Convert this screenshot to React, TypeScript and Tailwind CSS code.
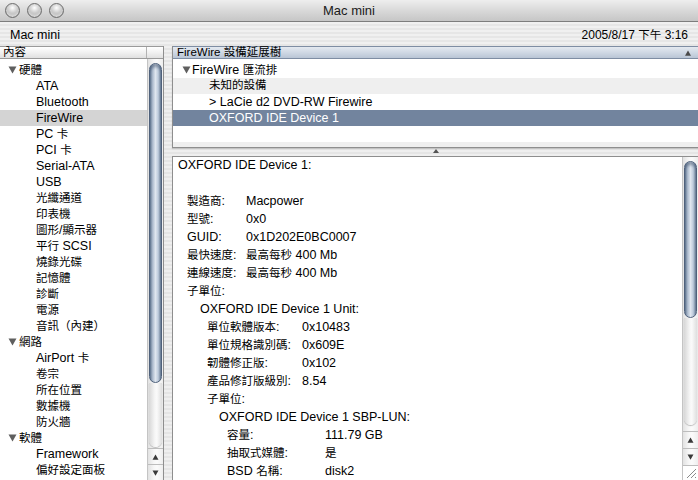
import { Fragment } from 'react';

const sidebar: { label: string; group?: boolean; selected?: boolean }[] = [
  { label: '硬體', group: true },
  { label: 'ATA' },
  { label: 'Bluetooth' },
  { label: 'FireWire', selected: true },
  { label: 'PC 卡' },
  { label: 'PCI 卡' },
  { label: 'Serial-ATA' },
  { label: 'USB' },
  { label: '光纖通道' },
  { label: '印表機' },
  { label: '圖形/顯示器' },
  { label: '平行 SCSI' },
  { label: '燒錄光碟' },
  { label: '記憶體' },
  { label: '診斷' },
  { label: '電源' },
  { label: '音訊（內建）' },
  { label: '網路', group: true },
  { label: 'AirPort 卡' },
  { label: '卷宗' },
  { label: '所在位置' },
  { label: '數據機' },
  { label: '防火牆' },
  { label: '軟體', group: true },
  { label: 'Framework' },
  { label: '偏好設定面板' },
];

type Line =
  | { kind: 'head'; text: string; indent: string }
  | { kind: 'pair'; label: string; value: string; indent: string; width: string }
  | { kind: 'blank' };

const details: Line[] = [
  { kind: 'head', text: 'OXFORD IDE Device 1:', indent: 'pl-[5px]' },
  { kind: 'blank' },
  { kind: 'pair', label: '製造商:', value: 'Macpower', indent: 'pl-[14px]', width: 'w-[59px]' },
  { kind: 'pair', label: '型號:', value: '0x0', indent: 'pl-[14px]', width: 'w-[59px]' },
  { kind: 'pair', label: 'GUID:', value: '0x1D202E0BC0007', indent: 'pl-[14px]', width: 'w-[59px]' },
  { kind: 'pair', label: '最快速度:', value: '最高每秒 400 Mb', indent: 'pl-[14px]', width: 'w-[59px]' },
  { kind: 'pair', label: '連線速度:', value: '最高每秒 400 Mb', indent: 'pl-[14px]', width: 'w-[59px]' },
  { kind: 'head', text: '子單位:', indent: 'pl-[14px]' },
  { kind: 'head', text: 'OXFORD IDE Device 1 Unit:', indent: 'pl-[27px]' },
  { kind: 'pair', label: '單位軟體版本:', value: '0x10483', indent: 'pl-[34px]', width: 'w-[95px]' },
  { kind: 'pair', label: '單位規格識別碼:', value: '0x609E', indent: 'pl-[34px]', width: 'w-[95px]' },
  { kind: 'pair', label: '韌體修正版:', value: '0x102', indent: 'pl-[34px]', width: 'w-[95px]' },
  { kind: 'pair', label: '產品修訂版級別:', value: '8.54', indent: 'pl-[34px]', width: 'w-[95px]' },
  { kind: 'head', text: '子單位:', indent: 'pl-[34px]' },
  { kind: 'head', text: 'OXFORD IDE Device 1 SBP-LUN:', indent: 'pl-[46px]' },
  { kind: 'pair', label: '容量:', value: '111.79 GB', indent: 'pl-[54px]', width: 'w-[98px]' },
  { kind: 'pair', label: '抽取式媒體:', value: '是', indent: 'pl-[54px]', width: 'w-[98px]' },
  { kind: 'pair', label: 'BSD 名稱:', value: 'disk2', indent: 'pl-[54px]', width: 'w-[98px]' },
];

// Chinese runs are drawn a touch smaller so they keep the narrow Lucida-era widths
function T({ s }: { s: string }) {
  const parts = s.split(/([\u3000-\u9fff\uff00-\uffef]+)/).filter(Boolean);
  return (
    <>
      {parts.map((p, i) =>
        /[\u3000-\u9fff\uff00-\uffef]/.test(p) ? (
          <span key={i} className="text-[11.5px]">{p}</span>
        ) : (
          <Fragment key={i}>{p}</Fragment>
        ),
      )}
    </>
  );
}

function Tri({ up = false, className = '' }: { up?: boolean; className?: string }) {
  return (
    <svg width="9" height="8" viewBox="0 0 9 8" className={className}>
      <polygon points={up ? '4.5,0.5 8.5,7.5 0.5,7.5' : '0.5,0.5 8.5,0.5 4.5,7.5'} fill="currentColor" />
    </svg>
  );
}

function Light() {
  return (
    <span className="h-[15px] w-[15px] rounded-full border border-[#6e6e6e] bg-[radial-gradient(circle_at_50%_30%,#ffffff_0%,#d6d6d6_35%,#9a9a9a_75%,#c8c8c8_100%)] shadow-[inset_0_-2px_3px_rgba(255,255,255,0.7)]" />
  );
}

function Scroller({ thumb, channel, arrowH, grip }: { thumb: string; channel: string; arrowH: string; grip?: boolean }) {
  return (
    <div className="flex h-full w-[16px] shrink-0 flex-col border-l border-[#c4c4c4] bg-[linear-gradient(90deg,#e2e2e2,#f7f7f7_40%,#fbfbfb_60%,#eeeeee)]">
      <div className="pt-[4px]">
        <div className={`mx-[1px] ${thumb} rounded-full border border-[#4f617b] bg-[linear-gradient(90deg,#6d819c_0%,#a9b8cb_22%,#dfe6ef_50%,#bccadb_75%,#74879f_100%)] shadow-[inset_0_3px_3px_rgba(20,40,70,0.4)]`} />
        <div className={`mx-[1px] ${channel} rounded-b-full bg-[linear-gradient(90deg,#d7d7d7,#f6f6f6_45%,#fafafa_60%,#dedede)] shadow-[0_1px_1px_rgba(0,0,0,0.25)]`} />
      </div>
      <div className="flex-1" />
      <div className={`flex ${arrowH} items-center justify-center border-t border-[#bdbdbd] text-[#3a3a3a]`}>
        <Tri up className="h-[6px] w-[7px]" />
      </div>
      <div className={`flex ${arrowH} items-center justify-center border-t border-[#bdbdbd] text-[#3a3a3a]`}>
        <Tri className="h-[6px] w-[7px]" />
      </div>
      {grip && (
        <div className="flex h-[15px] items-end justify-end border-t border-[#bdbdbd] bg-white pb-[1px] pr-[1px]">
          <svg width="12" height="12" viewBox="0 0 12 12">
            <path d="M11 2 L2 11 M11 6 L6 11 M11 10 L10 11" stroke="#8a8a8a" strokeWidth="1" />
          </svg>
        </div>
      )}
    </div>
  );
}

export default function App() {
  return (
    <div className="flex h-[480px] w-[698px] flex-col overflow-hidden bg-[#ececec] font-['Liberation_Sans','Noto_Sans_CJK_TC',sans-serif] text-[12.5px] leading-none text-black">
      {/* title bar */}
      <div className="relative flex h-[22px] shrink-0 items-center border-b border-[#7d7d7d] bg-[linear-gradient(180deg,#eeeeee,#d9d9d9_50%,#c6c6c6)] px-[5px]">
        <div className="flex gap-[7px]">
          <Light />
          <Light />
          <Light />
        </div>
        <div className="absolute inset-x-0 top-0 flex h-full items-center justify-center text-[13px] text-[#1a1a1a]">Mac mini</div>
      </div>

      {/* info strip */}
      <div className="flex h-[24px] shrink-0 items-center justify-between bg-[repeating-linear-gradient(180deg,#f0f0f0_0px,#f0f0f0_2px,#e6e6e6_2px,#e6e6e6_4px)] pl-[10px] pr-[10px] pt-[3px]">
        <span>Mac mini</span>
        <span className="text-[12px]">
          <T s="2005/8/17 下午 3:16" />
        </span>
      </div>

      {/* main */}
      <div className="flex min-h-0 flex-1 bg-[repeating-linear-gradient(180deg,#efefef_0px,#efefef_2px,#e5e5e5_2px,#e5e5e5_4px)]">
        {/* sidebar */}
        <div className="flex w-[164px] shrink-0 flex-col border-r border-[#8e8e8e] bg-white">
          <div className="flex h-[13px] shrink-0 border-b border-t border-[#9a9a9a] bg-[linear-gradient(180deg,#ffffff,#f1f1f1_50%,#e0e0e0)]">
            <div className="flex w-[147px] items-center border-r border-[#b2b2b2] pl-[3px] text-[11.5px]">內容</div>
            <div className="flex-1" />
          </div>
          <div className="flex min-h-0 flex-1">
            <div className="w-[147px] shrink-0 overflow-hidden pt-[3px]">
              {sidebar.map((item) => (
                <div
                  key={item.label}
                  className={`flex h-[16px] items-center ${item.group ? 'pl-[8px]' : 'pl-[36px]'} ${item.selected ? 'bg-[#d4d4d4]' : ''}`}
                >
                  {item.group && <Tri className="mr-[2px] text-[#5f5f5f]" />}
                  <span className="whitespace-pre">
                    <T s={item.label} />
                  </span>
                </div>
              ))}
            </div>
            <Scroller thumb="h-[320px]" channel="h-[64px]" arrowH="h-[16px]" />
          </div>
        </div>

        {/* splitter */}
        <div className="w-[8px] shrink-0" />

        {/* right */}
        <div className="flex min-w-0 flex-1 flex-col">
          <div className="flex h-[102px] shrink-0 flex-col overflow-hidden border-b border-l border-[#8e8e8e] bg-white shadow-[0_1px_1px_rgba(0,0,0,0.15)]">
            <div className="flex h-[13px] shrink-0 items-center justify-between border-b border-t border-[#7e8da3] bg-[linear-gradient(180deg,#e4e9f0,#cfd8e4_50%,#b9c5d5)] pl-[4px] pr-[6px] text-[11.5px]">
              <span>FireWire 設備延展樹</span>
              <Tri up className="h-[6px] w-[8px] text-[#4a4a4a]" />
            </div>
            <div className="pt-[3px]">
              <div className="flex h-[16px] items-center pl-[9px]">
                <Tri className="mr-[1px] text-[#5f5f5f]" />
                <span>
                  <T s="FireWire 匯流排" />
                </span>
              </div>
              <div className="flex h-[16px] items-center bg-[#efefef] pl-[36px]">
                <T s="未知的設備" />
              </div>
              <div className="flex h-[16px] items-center pl-[36px]">&gt; LaCie d2 DVD-RW Firewire</div>
              <div className="flex h-[16px] items-center bg-[#72849e] pl-[36px] text-white">OXFORD IDE Device 1</div>
              <div className="h-[16px]" />
              <div className="h-[16px] bg-[#efefef]" />
            </div>
          </div>

          <div className="flex h-[8px] shrink-0 items-start justify-center pl-[2px] pt-[1px]">
            <svg width="6" height="4" viewBox="0 0 6 4">
              <polygon points="3,0 6,4 0,4" fill="#555" />
            </svg>
          </div>

          <div className="flex min-h-0 flex-1 border-l border-t border-[#8e8e8e] bg-white">
            <div className="-mt-[1px] min-w-0 flex-1 overflow-hidden">
              {details.map((line, i) => (
                <Fragment key={i}>
                  {line.kind === 'blank' && <div className="h-[18px]" />}
                  {line.kind === 'head' && (
                    <div className={`flex h-[18px] items-center ${line.indent}`}>
                      <span className="whitespace-pre">
                        <T s={line.text} />
                      </span>
                    </div>
                  )}
                  {line.kind === 'pair' && (
                    <div className={`flex h-[18px] items-center ${line.indent}`}>
                      <span className={`${line.width} shrink-0 whitespace-pre`}>
                        <T s={line.label} />
                      </span>
                      <span className="whitespace-pre">
                        <T s={line.value} />
                      </span>
                    </div>
                  )}
                </Fragment>
              ))}
            </div>
            <Scroller thumb="h-[157px]" channel="h-[107px]" arrowH="h-[17px]" grip />
          </div>
        </div>
      </div>
    </div>
  );
}
